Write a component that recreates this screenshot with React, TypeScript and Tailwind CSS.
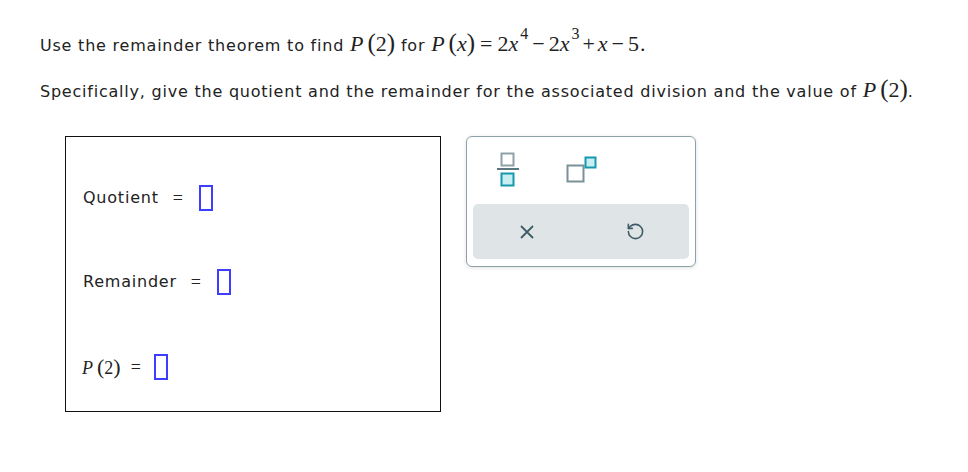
import React from "react";
import { RotateCcw } from "lucide-react";

const serif = { fontFamily: '"Liberation Serif", "Times New Roman", serif' };

function MathP2() {
  return (
    <span className="text-[22px] leading-none tracking-normal" style={serif}>
      <i>P</i>
      <span className="ml-[4px] text-[25px]">(</span>2<span className="text-[25px]">)</span>
    </span>
  );
}

function Sup({ c }: { c: string }) {
  return <span className="inline-block text-[16px] relative top-[-12px] ml-[2px]">{c}</span>;
}

function BlankBox() {
  return <span className="inline-block w-[14px] h-[26px] border-2 border-[#3d3dff] bg-white align-middle" />;
}

export default function App() {
  return (
    <div
      className="w-[968px] h-[472px] bg-white text-[#222] tracking-[0.78px]"
      style={{ fontFamily: '"DejaVu Sans", Verdana, sans-serif' }}
    >
      <div className="pl-[40px] pt-[24px]">
        <div className="flex items-baseline text-[16px] h-[40px]">
          <span>Use the remainder theorem to find&nbsp;</span>
          <MathP2 />
          <span>&nbsp;for&nbsp;</span>
          <span className="text-[22px] tracking-normal whitespace-nowrap" style={serif}>
            <i>P</i>
            <span className="ml-[4px] text-[25px]">(</span><i>x</i><span className="text-[25px]">)</span>
            <span className="mx-[5px]">=</span>2<i>x</i>
            <Sup c="4" />
            <span className="mx-[4px]">−</span>2<i>x</i>
            <Sup c="3" />
            <span className="ml-[3px] mr-[3px]">+</span><i>x</i>
            <span className="mx-[4px]">−</span>5<span className="ml-[1px]">.</span>
          </span>
        </div>
        <div className="flex items-baseline text-[16px] mt-[12px]">
          <span>Specifically, give the quotient and the remainder for the associated division and the value of&nbsp;</span>
          <MathP2 />
          <span>.</span>
        </div>
      </div>

      <div className="flex items-start pl-[65px] pt-[32px] gap-[25px]">
        <div className="w-[376px] h-[276px] border border-[#111] flex flex-col pl-[17px] pt-[48px]">
          <div className="flex items-center h-[26px] text-[16px]">
            <span>Quotient</span>
            <span className="ml-[14px] mr-[16px] text-[18px] tracking-normal" style={serif}>=</span>
            <BlankBox />
          </div>
          <div className="flex items-center h-[26px] text-[16px] mt-[58px]">
            <span>Remainder</span>
            <span className="ml-[14px] mr-[16px] text-[18px] tracking-normal" style={serif}>=</span>
            <BlankBox />
          </div>
          <div className="flex items-center h-[26px] text-[16px] mt-[59px] -ml-[1px]">
            <span className="text-[18px] leading-none tracking-normal" style={serif}>
              <i>P</i>
              <span className="ml-[4px] text-[22px]">(</span>2<span className="text-[22px]">)</span>
            </span>
            <span className="ml-[10px] mr-[13px] text-[18px] tracking-normal" style={serif}>=</span>
            <BlankBox />
          </div>
        </div>

        <div className="w-[230px] h-[131px] rounded-[6px] border border-[#8da2a8] bg-white shadow-[0_1px_4px_rgba(0,0,0,0.12)] flex flex-col px-[6px]">
          <div className="flex items-start h-[67px] pt-[15px]">
            <svg width="22" height="36" viewBox="0 0 22 36" className="ml-[24px]">
              <rect x="4.5" y="1.5" width="12" height="12" fill="white" stroke="#8fa1a6" strokeWidth="2" />
              <line x1="0" y1="17" x2="22" y2="17" stroke="#5d7680" strokeWidth="2" />
              <rect x="4.5" y="21.5" width="12" height="12" fill="#c8edf2" stroke="#1599ad" strokeWidth="2" />
            </svg>
            <svg width="32" height="28" viewBox="0 0 32 28" className="ml-[47px] mt-[4px]">
              <rect x="1.5" y="9.5" width="16" height="16" fill="white" stroke="#7b9097" strokeWidth="2" />
              <rect x="19.5" y="1.5" width="10" height="10" fill="#c8edf2" stroke="#1599ad" strokeWidth="2" />
            </svg>
          </div>
          <div className="h-[55px] rounded-[5px] bg-[#dfe5e7] flex items-center">
            <svg width="16" height="16" viewBox="0 0 16 16" className="ml-[46px]">
              <path d="M2 2 L14 14 M14 2 L2 14" stroke="#3f5c66" strokeWidth="1.8" fill="none" />
            </svg>
            <RotateCcw size={19} strokeWidth={2} color="#3f5c66" className="ml-[91px]" />
          </div>
        </div>
      </div>
    </div>
  );
}
